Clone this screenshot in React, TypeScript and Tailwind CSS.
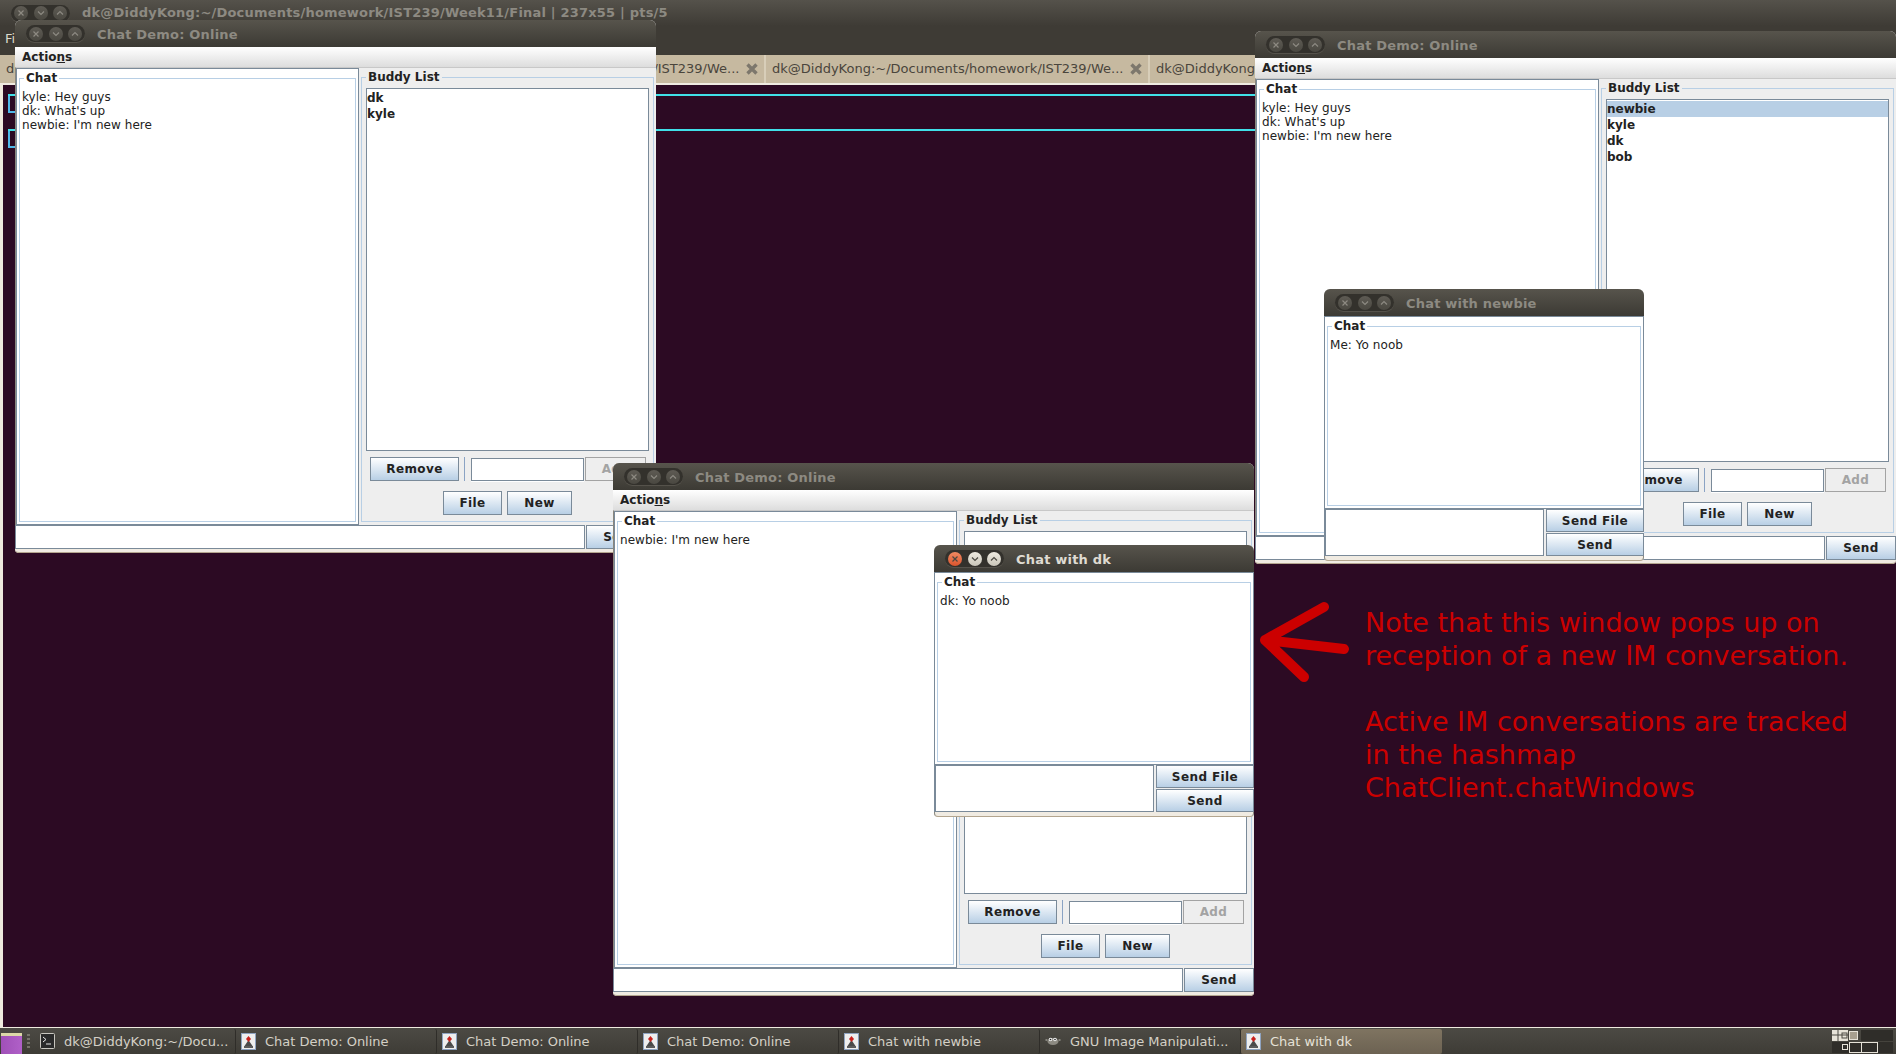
import type { ReactNode } from "react";

function WinButton({ kind, active }: { kind: "x" | "down" | "up"; active: boolean }) {
  const bg = !active
    ? "bg-gradient-to-b from-[#5e5b54] to-[#4a4841]"
    : kind === "x"
      ? "bg-gradient-to-b from-[#f08a62] to-[#d9532c]"
      : "bg-gradient-to-b from-[#eeeae0] to-[#c9c5b9]";
  const stroke = active ? "#4a4841" : "#8d8a82";
  return (
    <div className={`flex h-[14px] w-[14px] items-center justify-center rounded-full ${bg}`}>
      <svg width="8" height="8" viewBox="0 0 8 8" fill="none" stroke={stroke} strokeWidth="1.2">
        {kind === "x" && <path d="M1.5 1.5l5 5M6.5 1.5l-5 5" />}
        {kind === "down" && <path d="M1 2.5l3 3 3-3" />}
        {kind === "up" && <path d="M1 5.5l3-3 3 3" />}
      </svg>
    </div>
  );
}

function WinButtons({ active = false }: { active?: boolean }) {
  return (
    <div className="flex h-[17px] w-[59px] items-center justify-between rounded-full bg-[#33312c] px-[3px] shadow-[0_1px_0_#55524b]">
      <WinButton kind="x" active={active} />
      <WinButton kind="down" active={active} />
      <WinButton kind="up" active={active} />
    </div>
  );
}

function TitleBar({ title, active = false }: { title: string; active?: boolean }) {
  return (
    <div className="flex h-[27px] shrink-0 items-center rounded-t-[6px] bg-gradient-to-b from-[#57544c] to-[#3c3a34] pl-[11px]">
      <WinButtons active={active} />
      <span
        className={`mt-[2px] ml-[12px] text-[13px] font-bold tracking-[0.2px] ${active ? "text-[#dfdbd2]" : "text-[#8d8a82]"}`}
      >
        {title}
      </span>
    </div>
  );
}

function Btn({ className, disabled, children }: { className?: string; disabled?: boolean; children: ReactNode }) {
  return (
    <div
      className={`flex items-center justify-center border text-[12px] font-bold tracking-[0.4px] ${
        disabled
          ? "border-[#a3a3a3] bg-[#eeeeee] text-[#a3a3a3]"
          : "border-[#7a8a99] bg-gradient-to-b from-[#ffffff] to-[#b8cfe5] text-[#222222]"
      } ${className ?? ""}`}
    >
      {children}
    </div>
  );
}

function Field({ className }: { className?: string }) {
  return <div className={`border border-[#7a8a99] bg-white shadow-[0_1px_0_#ffffff] ${className ?? ""}`} />;
}

function Group({
  label,
  className,
  legendClass,
  children,
}: {
  label: string;
  className?: string;
  legendClass?: string;
  children: ReactNode;
}) {
  return (
    <fieldset className={`min-w-0 border border-[#b8cfe5] ${className ?? ""}`}>
      <legend className={`px-[2px] text-[12px] leading-[14px] font-bold text-[#222222] ${legendClass ?? "ml-[4px]"}`}>
        {label}
      </legend>
      {children}
    </fieldset>
  );
}

function ChatLines({ lines }: { lines: string[] }) {
  return (
    <div className="px-[2px] pt-[5px] text-[12px] leading-[14px] tracking-[0.05px] text-[#222222]">
      {lines.map((l) => (
        <div key={l}>{l}</div>
      ))}
    </div>
  );
}

function ChatDemoWindow({
  className,
  chat,
  buddies,
  selected,
}: {
  className: string;
  chat: string[];
  buddies: string[];
  selected?: string;
}) {
  return (
    <div className={`absolute flex h-[533px] w-[641px] flex-col rounded-t-[6px] rounded-b-[4px] bg-[#eeeeee] ${className}`}>
      <TitleBar title="Chat Demo: Online" />
      <div className="flex h-[20px] shrink-0 items-center bg-gradient-to-b from-[#ffffff] to-[#dddddd] pl-[7px] text-[12px] font-bold text-[#222222]">
        Actio<span className="underline">n</span>s
      </div>
      <div className="flex min-h-0 flex-1 border-t border-l border-[#c8c8c8] border-l-[#8a877e]">
        <div className="flex w-[343px] shrink-0 border border-[#7a8a99] bg-white p-[2px]">
          <Group label="Chat" className="flex-1">
            <ChatLines lines={chat} />
          </Group>
        </div>
        <div className="flex min-w-0 flex-1 pt-[2px] pr-[2px] pb-[3px] pl-[2px]">
          <Group label="Buddy List" legendClass="ml-0" className="flex min-h-0 flex-1 flex-col px-[4px] pb-[6px]">
            <div className="mt-[4px] h-[365px] border border-[#7a8a99] bg-white pt-px text-[12px] leading-[16px] font-bold text-[#222222]">
              {buddies.map((b) => (
                <div key={b} className={b === selected ? "bg-[#b8cfe5]" : ""}>
                  {b}
                </div>
              ))}
            </div>
            <div className="mt-[6px] flex h-[24px] items-center pl-[4px]">
              <Btn className="h-full w-[89px]">Remove</Btn>
              <div className="mr-[6px] ml-[5px] h-full w-px bg-[#8aa3c4]" />
              <Field className="h-[23px] w-[113px]" />
              <Btn className="ml-px h-full w-[61px]" disabled>
                Add
              </Btn>
            </div>
            <div className="mt-[10px] flex h-[24px] justify-center gap-[5px]">
              <Btn className="w-[59px]">File</Btn>
              <Btn className="w-[65px]">New</Btn>
            </div>
          </Group>
        </div>
      </div>
      <div className="flex h-[24px] shrink-0 gap-px">
        <Field className="flex-1" />
        <Btn className="w-[70px]">Send</Btn>
      </div>
      <div className="h-[4px] shrink-0 rounded-b-[4px] border-b border-[#b3a58e] bg-[#f0ebe2]" />
    </div>
  );
}

function ChatWindow({
  className,
  title,
  line,
  active,
}: {
  className: string;
  title: string;
  line: string;
  active?: boolean;
}) {
  return (
    <div className={`absolute flex h-[272px] w-[320px] flex-col rounded-t-[6px] rounded-b-[4px] bg-[#eeeeee] ${className}`}>
      <TitleBar title={title} active={active} />
      <div className="flex min-h-0 flex-1 border-x border-t border-[#7a8a99] bg-white p-[2px]">
        <Group label="Chat" className="flex-1">
          <ChatLines lines={[line]} />
        </Group>
      </div>
      <div className="flex h-[48px] shrink-0 gap-[2px] border-t border-l border-[#7a8a99]">
        <Field className="flex-1" />
        <div className="flex w-[98px] flex-col gap-[1px]">
          <Btn className="h-[24px]">Send File</Btn>
          <Btn className="h-[23px]">Send</Btn>
        </div>
      </div>
      <div className="h-[5px] shrink-0 rounded-b-[4px] border-x border-b border-x-[#8a877e] border-b-[#b3a58e] bg-[#f0ebe2]" />
    </div>
  );
}

function TermTab({ text, className }: { text: string; className: string }) {
  return (
    <div
      className={`flex h-full shrink-0 items-center justify-between border-r-2 border-[#d8ceb9] pr-[5px] pl-[6px] text-[13px] text-[#4a453c] ${className}`}
    >
      <span className="truncate">{text}</span>
      <svg width="14" height="14" viewBox="0 0 14 14" className="shrink-0" stroke="#7d776c" strokeWidth="3.4">
        <path d="M2.5 2.5l9 9M11.5 2.5l-9 9" />
      </svg>
    </div>
  );
}

function TerminalRow() {
  return (
    <div className="ml-[5px] h-[35px] border-t-2 border-[#40e0e8]">
      <div className="h-[17px] w-[10px] border-b-2 border-l-2 border-[#4fb8ea]" />
    </div>
  );
}

function JavaIcon() {
  return (
    <svg width="15" height="17" viewBox="0 0 15 17" className="shrink-0">
      <rect x="0.5" y="0.5" width="14" height="16" fill="#eeeeee" stroke="#8fa3c0" />
      <path d="M3.5 13l4-6 4 6z" fill="#4a4a4a" />
      <path d="M7.5 3l2.5 3-2.5 3L5 6z" fill="#c8201c" />
      <path d="M3 14h9" stroke="#2a2a2a" strokeWidth="1.5" />
    </svg>
  );
}

function TerminalIcon() {
  return (
    <svg width="15" height="16" viewBox="0 0 15 16" className="shrink-0">
      <rect x="0.5" y="0.5" width="14" height="15" rx="1" fill="#2a2a2a" stroke="#c8c6bf" />
      <path d="M3 4l3 2.5L3 9M6 11h5" stroke="#e8e8e8" fill="none" />
    </svg>
  );
}

function GimpIcon() {
  return (
    <svg width="16" height="12" viewBox="0 0 16 12" className="shrink-0">
      <ellipse cx="8" cy="6.5" rx="5.5" ry="3.5" fill="#8c8a82" />
      <circle cx="5.5" cy="4.5" r="1.8" fill="#eeeeee" />
      <circle cx="10" cy="4.5" r="1.8" fill="#eeeeee" />
      <circle cx="5.5" cy="4.5" r="0.8" fill="#222222" />
      <circle cx="10" cy="4.5" r="0.8" fill="#222222" />
      <path d="M0.5 5h2M13.5 5h2" stroke="#c8c6bf" />
    </svg>
  );
}

function TaskItem({ label, icon, active }: { label: string; icon: ReactNode; active?: boolean }) {
  return (
    <div
      className={`flex h-[25px] w-[201px] shrink-0 items-center gap-[9px] rounded-[2px] pl-[5px] text-[13px] ${
        active
          ? "bg-gradient-to-b from-[#7f7461] to-[#6c6252] text-[#e6e2d8]"
          : "border-r border-[#2f2d29] text-[#d4d0c6]"
      }`}
    >
      {icon}
      <span className="mt-px truncate">{label}</span>
    </div>
  );
}

function Pager() {
  return (
    <svg width="61" height="23" viewBox="0 0 61 23" className="shrink-0" fill="none">
      <rect x="29" y="0" width="32" height="11" fill="#2f2d29" />
      <rect x="0" y="12" width="61" height="11" fill="#2f2d29" />
      <rect x="0" y="0" width="16" height="11" fill="#e6e2d8" />
      <path d="M6 0v11M0 5h16" stroke="#4a4842" />
      <rect x="10" y="3" width="5" height="5" stroke="#4a4842" />
      <rect x="17.5" y="1.5" width="8" height="8" fill="#a8a090" stroke="#e6e2d8" />
      <rect x="10.5" y="14.5" width="5" height="5" stroke="#e6e2d8" />
      <rect x="17.5" y="12.5" width="12" height="10" stroke="#e6e2d8" />
      <rect x="29.5" y="12.5" width="16" height="10" stroke="#e6e2d8" />
    </svg>
  );
}

export default function App() {
  const tabText = "dk@DiddyKong:~/Documents/homework/IST239/We...";
  return (
    <div className="relative flex h-[1054px] w-[1896px] flex-col overflow-hidden bg-[#2c0a23] font-['DejaVu_Sans',sans-serif]">
      {/* terminal behind everything */}
      <div className="flex h-[55px] shrink-0 flex-col bg-[#3e3b35]">
        <div className="flex h-[26px] items-center bg-gradient-to-b from-[#55524b] to-[#3e3b35] pl-[11px]">
          <WinButtons />
          <span className="ml-[12px] text-[13px] font-bold tracking-[0.2px] text-[#8d8a82]">
            dk@DiddyKong:~/Documents/homework/IST239/Week11/Final | 237x55 | pts/5
          </span>
        </div>
        <div className="pt-[3px] pl-[5px] text-[13px] text-[#dcd8cc]">Fi</div>
      </div>
      <div className="flex h-[28px] shrink-0 bg-[#c6b9a0]">
        <TermTab text={tabText} className="w-[382px]" />
        <TermTab text={tabText} className="w-[384px]" />
        <TermTab text={tabText} className="w-[384px]" />
        <TermTab text={tabText} className="w-[384px]" />
      </div>
      <div className="h-[2px] shrink-0 bg-[#f0ebe2]" />
      <div className="min-h-0 flex-1 border-l-[3px] border-[#efeade] pt-[9px]">
        <TerminalRow />
        <TerminalRow />
      </div>
      <div className="h-px shrink-0 bg-[#efeade]" />

      {/* bottom panel */}
      <div className="flex h-[26px] shrink-0 items-center bg-gradient-to-b from-[#4c4a44] to-[#3e3c36]">
        <div className="ml-px flex h-[21px] w-[21px] shrink-0 flex-col self-end">
          <div className="h-[3px] bg-[#dcd8a8]" />
          <div className="flex-1 bg-gradient-to-r from-[#a050b8] to-[#b060c8]" />
        </div>
        <div className="mx-[5px] h-[14px] w-[3px] shrink-0 bg-[repeating-linear-gradient(to_bottom,#77746c_0,#77746c_2px,transparent_2px,transparent_4px)]" />
        <TaskItem icon={<TerminalIcon />} label="dk@DiddyKong:~/Docu..." />
        <TaskItem icon={<JavaIcon />} label="Chat Demo: Online" />
        <TaskItem icon={<JavaIcon />} label="Chat Demo: Online" />
        <TaskItem icon={<JavaIcon />} label="Chat Demo: Online" />
        <TaskItem icon={<JavaIcon />} label="Chat with newbie" />
        <TaskItem icon={<GimpIcon />} label="GNU Image Manipulati..." />
        <TaskItem icon={<JavaIcon />} label="Chat with dk" active />
        <div className="flex-1" />
        <div className="pr-[3px]">
          <Pager />
        </div>
      </div>

      {/* desktop windows */}
      <ChatDemoWindow
        className="top-[20px] left-[15px]"
        chat={["kyle: Hey guys", "dk: What's up", "newbie: I'm new here"]}
        buddies={["dk", "kyle"]}
      />
      <ChatDemoWindow
        className="top-[31px] left-[1255px]"
        chat={["kyle: Hey guys", "dk: What's up", "newbie: I'm new here"]}
        buddies={["newbie", "kyle", "dk", "bob"]}
        selected="newbie"
      />
      <ChatDemoWindow className="top-[463px] left-[613px]" chat={["newbie: I'm new here"]} buddies={[]} />
      <ChatWindow className="top-[289px] left-[1324px]" title="Chat with newbie" line="Me: Yo noob" />
      <ChatWindow className="top-[545px] left-[934px]" title="Chat with dk" line="dk: Yo noob" active />

      {/* annotation */}
      <svg width="100" height="90" viewBox="0 0 100 90" className="absolute top-[600px] left-[1258px]" fill="none">
        <path
          d="M66 7L7 40L46 77M7 40L86 49"
          stroke="#cc0000"
          strokeWidth="10"
          strokeLinecap="round"
          strokeLinejoin="round"
        />
      </svg>
      <div className="absolute top-[606px] left-[1365px] text-[27px] leading-[33px] whitespace-pre text-[#cc0000]">
        {"Note that this window pops up on\nreception of a new IM conversation.\n\nActive IM conversations are tracked\nin the hashmap\nChatClient.chatWindows"}
      </div>
    </div>
  );
}
